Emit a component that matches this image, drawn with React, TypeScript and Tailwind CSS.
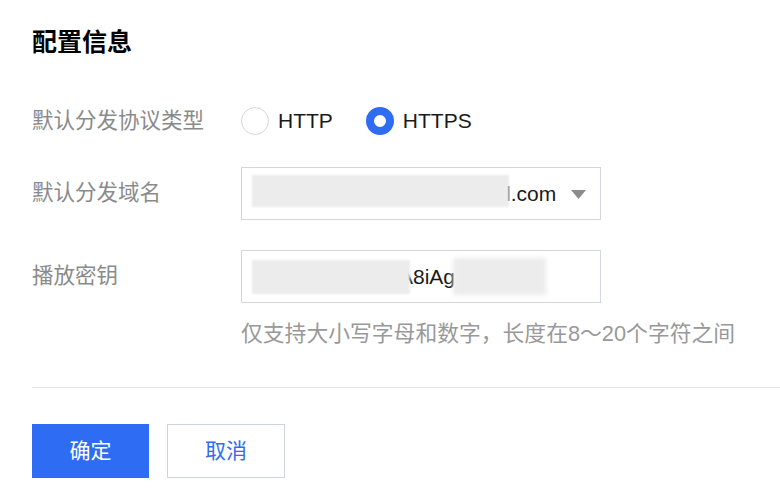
import React from "react";

const font = { fontFamily: '"Liberation Sans", "Noto Sans CJK SC", sans-serif' };

export default function App() {
  return (
    <div className="w-[780px] h-[500px] bg-white overflow-hidden" style={font}>
      <div className="pl-8">
        <div className="mt-[26px] h-[32px] leading-[32px] text-[25px] font-bold text-black">配置信息</div>

        <div className="mt-[43px] flex items-center h-[40px]">
          <div className="w-[209px] text-[21.5px] text-[#8a8a8a]">默认分发协议类型</div>
          <div className="flex items-center">
            <span className="w-[28px] h-[28px] rounded-full border border-[#d3d6dc] bg-white box-border" />
            <span className="ml-[9px] text-[21px] text-[#1a1a1a]">HTTP</span>
            <span className="ml-[33px] w-[28px] h-[28px] rounded-full border-[8px] border-[#2f6cf4] bg-white box-border" />
            <span className="ml-[9px] text-[21px] text-[#1a1a1a]">HTTPS</span>
          </div>
        </div>

        <div className="mt-[26px] flex items-center h-[53px]">
          <div className="w-[209px] text-[21.5px] text-[#8a8a8a]">默认分发域名</div>
          <div className="relative w-[360px] h-[53px] border border-[#d3d6dc] box-border flex items-center">
            <span className="absolute left-[264px] top-1/2 -translate-y-1/2 text-[21px] text-[#1a1a1a]">l.com</span>
            <div className="absolute left-[10px] top-[7px] w-[257px] h-[32px] bg-[#ececec] blur-[1px]" />
            <svg className="absolute left-[329px] top-[22px]" width="15" height="9" viewBox="0 0 15 9">
              <path d="M0 0 H15 L7.5 9 Z" fill="#8c8c8c" />
            </svg>
          </div>
        </div>

        <div className="mt-[30px] flex items-center h-[53px]">
          <div className="w-[209px] text-[21.5px] text-[#8a8a8a]">播放密钥</div>
          <div className="relative w-[360px] h-[53px] border border-[#d3d6dc] box-border">
            <span className="absolute left-[157px] top-1/2 -translate-y-1/2 text-[21px] text-[#1a1a1a]">A8iAg</span>
            <div className="absolute left-[10px] top-[9px] w-[158px] h-[34px] bg-[#ececec] blur-[1px]" />
            <div className="absolute left-[211px] top-[7px] w-[93px] h-[37px] bg-[#ececec] blur-[2px]" />
          </div>
        </div>

        <div className="mt-[16px] pl-[209px] h-[30px] leading-[30px] text-[21.8px] text-[#999999]">
          仅支持大小写字母和数字，长度在8～20个字符之间
        </div>

        <div className="mt-[38px] h-px bg-[#e5e5e5]" />

        <div className="mt-[36px] flex gap-[18px]">
          <button className="w-[117px] h-[54px] bg-[#2f6cf4] text-white text-[21px]">确定</button>
          <button className="w-[118px] h-[54px] border border-[#cfd3db] box-border bg-white text-[#2f6cf4] text-[21px]">取消</button>
        </div>
      </div>
    </div>
  );
}
